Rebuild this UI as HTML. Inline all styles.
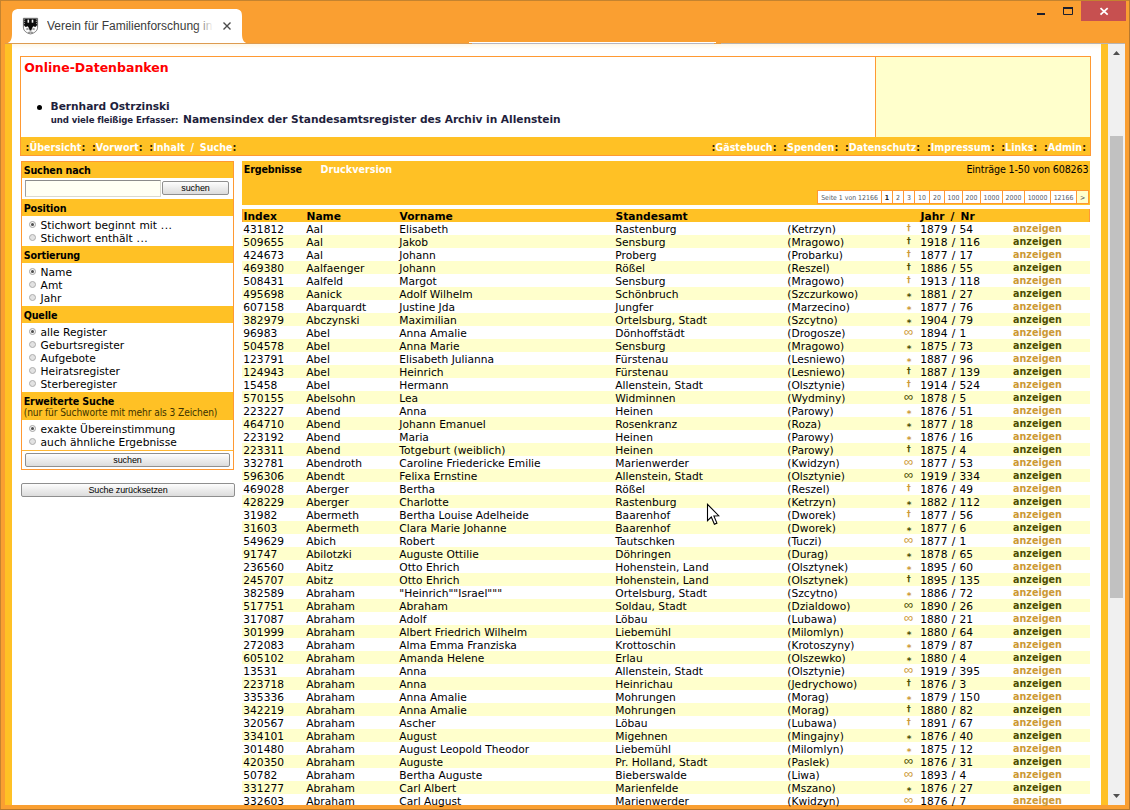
<!DOCTYPE html>
<html lang="de">
<head>
<meta charset="utf-8">
<title>Verein für Familienforschung in Ost- und Westpreußen</title>
<style>
*{box-sizing:border-box;margin:0;padding:0}
html,body{width:1130px;height:810px;overflow:hidden}
body{position:relative;background:#FA9F31;font-family:"DejaVu Sans","Liberation Sans",sans-serif;font-size:10.67px;color:#000}
.abs{position:absolute}
/* window chrome */
#edgeT{left:0;top:0;width:1130px;height:1px;background:#C4832F}
#edgeL{left:0;top:0;width:1px;height:810px;background:#C4832F}
#edgeR{left:1129px;top:0;width:1px;height:810px;background:#B9782B}
#edgeB{left:0;top:809px;width:1130px;height:1px;background:#B9782B}
#closeb{left:1081px;top:1px;width:45px;height:20px;background:#C75050}
#tabtitle{left:47px;top:18px;width:166px;height:16px;font:12px/16px "Liberation Sans",sans-serif;color:#3b3b3b;white-space:nowrap;overflow:hidden}
#tabfade{left:196px;top:18px;width:18px;height:16px;background:linear-gradient(90deg,rgba(255,255,255,0),#fff 95%)}
/* viewport */
#view{left:5px;top:44px;width:1103px;height:761px;background:#FFC125;overflow:hidden}
#page{left:7px;top:0;width:1089px;height:761px;background:#fff}
#shade{left:0;top:0;width:1089px;height:5px;background:linear-gradient(180deg,#FFF7E6,#fff)}
#sbar{left:1108px;top:44px;width:17px;height:761px;background:#F0F0F0}
#thumb{left:2px;top:92px;width:13px;height:462px;background:#C1C1C1}
/* header box (coords relative to body) */
#hbox{left:20px;top:56px;width:1071px;height:100px;border:1px solid #FF9933;background:#fff}
#hright{left:854px;top:0;width:215px;height:80px;background:#FFFFCC;border-left:1px solid #FF9933}
#nav{left:0;top:80px;width:1069px;height:18px;background:#FFC125}
.navt{top:85px;font:bold 9.6px/12px "DejaVu Sans",sans-serif;color:#fff;white-space:pre}
.navt b{color:#2e2000;font-weight:bold}
h1{left:3.2px;top:3px;font:bold 12.5px/16px "DejaVu Sans",sans-serif;color:#FF0000;white-space:nowrap}
#bullet{left:15.5px;top:48px;width:5px;height:5px;border-radius:50%;background:#000}
#l1{left:29.6px;top:43px;font:bold 10.67px/13px "DejaVu Sans",sans-serif;color:#1F1F3D;white-space:nowrap;letter-spacing:-0.04px}
#l2{left:29.8px;top:56px;font:bold 10.67px/13px "DejaVu Sans",sans-serif;color:#1F1F3D;white-space:nowrap;letter-spacing:-0.05px}
#l2 small{font:bold 9.55px/13px "DejaVu Sans Condensed","DejaVu Sans",sans-serif;letter-spacing:-0.1px;margin-right:1px}
/* left panel */
#panel{left:21px;top:161px;width:213px;height:309px;border:1px solid #FF9933;background:#fff}
.ph{left:0;width:211px;background:#FFC125;font:bold 10.67px/13px "DejaVu Sans Condensed","DejaVu Sans",sans-serif;letter-spacing:-0.15px;padding:3px 0 0 1.7px;white-space:nowrap}
.ph small{display:block;font:normal 10.15px/10px "DejaVu Sans Condensed","DejaVu Sans",sans-serif;color:#3d3300;letter-spacing:-0.1px}
.rl{left:18.6px;font:10.67px/13px "DejaVu Sans",sans-serif;white-space:nowrap}
.rd{left:7px;width:7px;height:7px;border-radius:50%;border:1px solid #adadad;background:#e2e2e2}
.rd.on{background:#f4f4f4;border-color:#a4a4a4}
.rd.on::after{content:"";position:absolute;left:1px;top:1px;width:3px;height:3px;border-radius:50%;background:#4e4e4e}
.btn{border:1px solid #8f8f8f;border-radius:2px;background:linear-gradient(180deg,#fdfdfd 0,#ececec 50%,#dcdcdc 100%);font:9px/12px "Liberation Sans",sans-serif;color:#000;text-align:center;letter-spacing:-0.1px}
#inp{left:3px;top:18px;width:136px;height:17px;background:#FFFFF4;border:1px solid #d9d9d0;border-top-color:#8b8b8b;border-left-color:#9e9e9e}
/* results */
#rhead{left:242px;top:161px;width:848px;height:44px;background:#FFC125}
#rh1{left:1.8px;top:2px;font:bold 10.67px/13px "DejaVu Sans Condensed","DejaVu Sans",sans-serif;letter-spacing:-0.15px}
#rh2{left:78.6px;top:2px;font:bold 9.6px/13px "DejaVu Sans",sans-serif;color:#fff}
#rh3{right:1.5px;top:2px;font:10.67px/13px "DejaVu Sans Condensed","DejaVu Sans",sans-serif;letter-spacing:-0.14px;white-space:nowrap}
#pag{left:575px;top:29px;height:14px;display:flex;background:#FF9933;padding:1px 0 1px 1px}
#pag span{display:block;height:12px;padding-top:1px;margin-right:1px;background:#fff;font:6.9px/12px "DejaVu Sans Condensed","DejaVu Sans",sans-serif;color:#555a66;text-align:center;white-space:nowrap;overflow:hidden}
#pag span.cur{font-weight:bold;color:#222}
#pag span.nx{background:#FFFFCC}
#thead{left:242px;top:209px;width:848px;height:13px;background:#FFC125;border-left:1px solid #FF9933;border-right:1px solid #FF9933;font:bold 10.67px/13px "DejaVu Sans",sans-serif}
#thead span{position:absolute;top:1px;white-space:nowrap}
#tbody{left:242px;top:222px;width:848px;height:585px}
.r{position:relative;height:13px;width:848px;font:10.67px/13px "DejaVu Sans",sans-serif;white-space:nowrap}
.r.e{background:#FFFFCC}
.r span{position:absolute;top:1px}
.c1{left:1.3px}.c2{left:64.3px}.c3{left:157.3px}.c4{left:373.3px}.c5{left:545.3px}.c7{left:678.3px;word-spacing:0.9px}
.c6{left:656.7px;width:20px;text-align:center;color:#CC9933}
.r .sd{font:bold 8px/9px "DejaVu Sans",sans-serif;top:1.5px}
.r .sa{font:bold 9px/10px "DejaVu Sans",sans-serif;top:4.5px;left:657.2px}
.r .si{font:13px/10px "Liberation Sans","DejaVu Sans",sans-serif;top:1px}
.c8{left:771px;top:0 !important;font:bold 9.6px/13px "DejaVu Sans",sans-serif;color:#CC9933}
.e .c6,.e .c8{color:#4D4D00}
</style>
</head>
<body>
<!-- window frame -->
<div class="abs" id="edgeT"></div><div class="abs" id="edgeL"></div><div class="abs" id="edgeR"></div><div class="abs" id="edgeB"></div>
<svg class="abs" style="left:0;top:0" width="1130" height="44" viewBox="0 0 1130 44">
  <path d="M5 44 C10 43 12 40 12 34 L12 16 C12 11 14 9 19 9 L235 9 C240 9 242 11 242 16 L242 34 C242 40 244 43 249 44 Z" fill="#fff"/>
  <rect x="5" y="43" width="467" height="1" fill="#DD9B50"/><rect x="472" y="43" width="242" height="1" fill="#B6B6C2"/><rect x="714" y="43" width="7" height="1" fill="#E39D48"/><rect x="721" y="43" width="404" height="1" fill="#B9B4B0"/><rect x="469" y="42" width="247" height="1" fill="#fff"/>
  <!-- favicon: coat of arms with eagle -->
  <g transform="translate(23,18)">
    <path d="M0.4 0.3 H14.6 V9.2 C14.6 12.8 11.5 15.2 7.5 15.9 C3.5 15.2 0.4 12.8 0.4 9.2 Z" fill="#fbfbfb" stroke="#555" stroke-width="0.8"/>
    <path d="M0.8 0.8 H14.2 V7.2 L12.3 9 L10.2 8.2 L9 10.2 L8.3 12.6 H6.7 L6 10.2 L4.8 8.2 L2.7 9 L0.8 7.2 Z" fill="#0c0c0c"/>
    <rect x="4.5" y="1.6" width="1.6" height="3.1" fill="#f4f4f4"/><rect x="8.7" y="1.6" width="1.6" height="3.1" fill="#f4f4f4"/>
    <path d="M1 1.8 H2.2 M1 3.6 H2.2 M1 5.6 H2 M12.8 1.8 H14 M12.8 3.6 H14 M13 5.6 H14 M1.2 8.3 H2 M13 8.3 H13.8" stroke="#ddd" stroke-width="0.7" fill="none"/>
    <path d="M3 10.5 L5.5 9.8 L5.8 11.5 L3.6 12.2 Z M12 10.5 L9.5 9.8 L9.2 11.5 L11.4 12.2 Z" fill="#9a9a9a"/>
    <path d="M5 14 Q7.5 13 10 14 L9.4 14.9 Q7.5 14.3 5.6 14.9 Z" fill="#777"/>
  </g>
  <!-- tab close -->
  <path d="M223.5 22.5 L230.5 29.5 M230.5 22.5 L223.5 29.5" stroke="#4a4a4a" stroke-width="1.4" fill="none"/>
  <!-- window buttons -->
  <rect x="1037" y="13" width="8" height="2" fill="#1b1f2e"/>
  <path d="M1063.5 8 H1072.5 V14.5 H1063.5 Z" fill="none" stroke="#1b1f2e" stroke-width="1"/>
  <rect x="1063" y="7" width="10" height="2" fill="#1b1f2e"/>
</svg>
<div class="abs" id="closeb"><svg width="45" height="20" viewBox="0 0 45 20"><path d="M19.5 7.1 L26.7 13.7 M26.7 7.1 L19.5 13.7" stroke="#fff" stroke-width="1.8" fill="none"/></svg></div>
<div class="abs" id="tabtitle">Verein für Familienforschung in</div>
<div class="abs" id="tabfade"></div>

<!-- page viewport -->
<div class="abs" id="view"><div class="abs" id="page"><div class="abs" id="shade"></div></div></div>
<div class="abs" id="sbar">
  <div class="abs" id="thumb"></div>
  <svg class="abs" style="left:0;top:0" width="17" height="761" viewBox="0 0 17 761"><path d="M5 11 L8.5 7 L12 11 Z" fill="#505050"/><path d="M5 750 L12 750 L8.5 754 Z" fill="#505050"/></svg>
</div>

<!-- header -->
<div class="abs" id="hbox">
  <h1 class="abs">Online-Datenbanken</h1>
  <div class="abs" id="bullet"></div>
  <div class="abs" id="l1">Bernhard Ostrzinski</div>
  <div class="abs" id="l2"><small>und viele fleißige Erfasser:</small> Namensindex der Standesamtsregister des Archiv in Allenstein</div>
  <div class="abs" id="hright"></div>
  <div class="abs" id="nav"></div>
  <div class="abs navt" style="left:4.6px"><b>:</b>Übersicht<b>:</b>  <b>:</b>Vorwort<b>:</b>  <b>:</b><span style="word-spacing:2.4px">Inhalt / Suche</span><b>:</b></div>
  <div class="abs navt" style="right:4px"><b>:</b>Gästebuch<b>:</b>  <b>:</b>Spenden<b>:</b>  <b>:</b>Datenschutz<b>:</b>  <b>:</b>Impressum<b>:</b>  <b>:</b>Links<b>:</b>  <b>:</b>Admin<b>:</b></div>
</div>

<!-- left search panel -->
<div class="abs" id="panel">
  <div class="abs ph" style="top:0;height:16px;padding-top:2px">Suchen nach</div>
  <div class="abs" id="inp"></div>
  <div class="abs btn" style="left:140px;top:19px;width:67px;height:14px">suchen</div>
  <div class="abs ph" style="top:37px;height:17px">Position</div>
  <div class="abs rd on" style="top:59px"></div><div class="abs rl" style="top:57px;word-spacing:0.5px">Stichwort beginnt mit <span style="letter-spacing:0.5px">...</span></div>
  <div class="abs rd" style="top:72px"></div><div class="abs rl" style="top:70px;word-spacing:0.5px">Stichwort enthält <span style="letter-spacing:0.5px">...</span></div>
  <div class="abs ph" style="top:84px;height:17px">Sortierung</div>
  <div class="abs rd on" style="top:106px"></div><div class="abs rl" style="top:104px">Name</div>
  <div class="abs rd" style="top:119px"></div><div class="abs rl" style="top:117px">Amt</div>
  <div class="abs rd" style="top:132px"></div><div class="abs rl" style="top:130px">Jahr</div>
  <div class="abs ph" style="top:144px;height:17px">Quelle</div>
  <div class="abs rd on" style="top:166px"></div><div class="abs rl" style="top:164px">alle Register</div>
  <div class="abs rd" style="top:179px"></div><div class="abs rl" style="top:177px">Geburtsregister</div>
  <div class="abs rd" style="top:192px"></div><div class="abs rl" style="top:190px">Aufgebote</div>
  <div class="abs rd" style="top:205px"></div><div class="abs rl" style="top:203px">Heiratsregister</div>
  <div class="abs rd" style="top:218px"></div><div class="abs rl" style="top:216px">Sterberegister</div>
  <div class="abs ph" style="top:230px;height:28px">Erweiterte Suche<small>(nur für Suchworte mit mehr als 3 Zeichen)</small></div>
  <div class="abs rd on" style="top:263px"></div><div class="abs rl" style="top:261px">exakte Übereinstimmung</div>
  <div class="abs rd" style="top:276px"></div><div class="abs rl" style="top:274px">auch ähnliche Ergebnisse</div>
  <div class="abs" style="left:0;top:288px;width:211px;height:1px;background:#FFB733"></div>
  <div class="abs btn" style="left:3px;top:291px;width:205px;height:14px">suchen</div>
</div>
<div class="abs btn" style="left:21px;top:483px;width:214px;height:14px">Suche zurücksetzen</div>

<!-- results header -->
<div class="abs" id="rhead">
  <div class="abs" id="rh1">Ergebnisse</div>
  <div class="abs" id="rh2">Druckversion</div>
  <div class="abs" id="rh3">Einträge 1-50 von 608263</div>
  <div class="abs" id="pag"><span style="width:63px">Seite 1 von 12166</span><span class="cur" style="width:10px">1</span><span style="width:10px">2</span><span style="width:10px">3</span><span style="width:14px">10</span><span style="width:14px">20</span><span style="width:17px">100</span><span style="width:17px">200</span><span style="width:21px">1000</span><span style="width:21px">2000</span><span style="width:25px">10000</span><span style="width:25px">12166</span><span class="nx" style="width:11px">&gt;</span></div>
</div>
<div class="abs" id="thead"><span style="left:0.5px">Index</span><span style="left:63.5px">Name</span><span style="left:156.5px">Vorname</span><span style="left:372.5px">Standesamt</span><span style="left:677.5px;word-spacing:2.4px">Jahr / Nr</span></div>
<div class="abs" id="tbody">
<div class="r"><span class="c1">431812</span><span class="c2">Aal</span><span class="c3">Elisabeth</span><span class="c4">Rastenburg</span><span class="c5">(Ketrzyn)</span><span class="c6 sd">†</span><span class="c7">1879 / 54</span><span class="c8">anzeigen</span></div>
<div class="r e"><span class="c1">509655</span><span class="c2">Aal</span><span class="c3">Jakob</span><span class="c4">Sensburg</span><span class="c5">(Mragowo)</span><span class="c6 sd">†</span><span class="c7">1918 / 116</span><span class="c8">anzeigen</span></div>
<div class="r"><span class="c1">424673</span><span class="c2">Aal</span><span class="c3">Johann</span><span class="c4">Proberg</span><span class="c5">(Probarku)</span><span class="c6 sd">†</span><span class="c7">1877 / 17</span><span class="c8">anzeigen</span></div>
<div class="r e"><span class="c1">469380</span><span class="c2">Aalfaenger</span><span class="c3">Johann</span><span class="c4">Rößel</span><span class="c5">(Reszel)</span><span class="c6 sd">†</span><span class="c7">1886 / 55</span><span class="c8">anzeigen</span></div>
<div class="r"><span class="c1">508431</span><span class="c2">Aalfeld</span><span class="c3">Margot</span><span class="c4">Sensburg</span><span class="c5">(Mragowo)</span><span class="c6 sd">†</span><span class="c7">1913 / 118</span><span class="c8">anzeigen</span></div>
<div class="r e"><span class="c1">495698</span><span class="c2">Aanick</span><span class="c3">Adolf Wilhelm</span><span class="c4">Schönbruch</span><span class="c5">(Szczurkowo)</span><span class="c6 sa">*</span><span class="c7">1881 / 27</span><span class="c8">anzeigen</span></div>
<div class="r"><span class="c1">607158</span><span class="c2">Abarquardt</span><span class="c3">Justine Jda</span><span class="c4">Jungfer</span><span class="c5">(Marzecino)</span><span class="c6 sa">*</span><span class="c7">1877 / 76</span><span class="c8">anzeigen</span></div>
<div class="r e"><span class="c1">382979</span><span class="c2">Abczynski</span><span class="c3">Maximilian</span><span class="c4">Ortelsburg, Stadt</span><span class="c5">(Szcytno)</span><span class="c6 sa">*</span><span class="c7">1904 / 79</span><span class="c8">anzeigen</span></div>
<div class="r"><span class="c1">96983</span><span class="c2">Abel</span><span class="c3">Anna Amalie</span><span class="c4">Dönhoffstädt</span><span class="c5">(Drogosze)</span><span class="c6 si">∞</span><span class="c7">1894 / 1</span><span class="c8">anzeigen</span></div>
<div class="r e"><span class="c1">504578</span><span class="c2">Abel</span><span class="c3">Anna Marie</span><span class="c4">Sensburg</span><span class="c5">(Mragowo)</span><span class="c6 sa">*</span><span class="c7">1875 / 73</span><span class="c8">anzeigen</span></div>
<div class="r"><span class="c1">123791</span><span class="c2">Abel</span><span class="c3">Elisabeth Julianna</span><span class="c4">Fürstenau</span><span class="c5">(Lesniewo)</span><span class="c6 sa">*</span><span class="c7">1887 / 96</span><span class="c8">anzeigen</span></div>
<div class="r e"><span class="c1">124943</span><span class="c2">Abel</span><span class="c3">Heinrich</span><span class="c4">Fürstenau</span><span class="c5">(Lesniewo)</span><span class="c6 sd">†</span><span class="c7">1887 / 139</span><span class="c8">anzeigen</span></div>
<div class="r"><span class="c1">15458</span><span class="c2">Abel</span><span class="c3">Hermann</span><span class="c4">Allenstein, Stadt</span><span class="c5">(Olsztynie)</span><span class="c6 sd">†</span><span class="c7">1914 / 524</span><span class="c8">anzeigen</span></div>
<div class="r e"><span class="c1">570155</span><span class="c2">Abelsohn</span><span class="c3">Lea</span><span class="c4">Widminnen</span><span class="c5">(Wydminy)</span><span class="c6 si">∞</span><span class="c7">1878 / 5</span><span class="c8">anzeigen</span></div>
<div class="r"><span class="c1">223227</span><span class="c2">Abend</span><span class="c3">Anna</span><span class="c4">Heinen</span><span class="c5">(Parowy)</span><span class="c6 sa">*</span><span class="c7">1876 / 51</span><span class="c8">anzeigen</span></div>
<div class="r e"><span class="c1">464710</span><span class="c2">Abend</span><span class="c3">Johann Emanuel</span><span class="c4">Rosenkranz</span><span class="c5">(Roza)</span><span class="c6 sa">*</span><span class="c7">1877 / 18</span><span class="c8">anzeigen</span></div>
<div class="r"><span class="c1">223192</span><span class="c2">Abend</span><span class="c3">Maria</span><span class="c4">Heinen</span><span class="c5">(Parowy)</span><span class="c6 sa">*</span><span class="c7">1876 / 16</span><span class="c8">anzeigen</span></div>
<div class="r e"><span class="c1">223311</span><span class="c2">Abend</span><span class="c3">Totgeburt (weiblich)</span><span class="c4">Heinen</span><span class="c5">(Parowy)</span><span class="c6 sd">†</span><span class="c7">1875 / 4</span><span class="c8">anzeigen</span></div>
<div class="r"><span class="c1">332781</span><span class="c2">Abendroth</span><span class="c3">Caroline Friedericke Emilie</span><span class="c4">Marienwerder</span><span class="c5">(Kwidzyn)</span><span class="c6 si">∞</span><span class="c7">1877 / 53</span><span class="c8">anzeigen</span></div>
<div class="r e"><span class="c1">596306</span><span class="c2">Abendt</span><span class="c3">Felixa Ernstine</span><span class="c4">Allenstein, Stadt</span><span class="c5">(Olsztynie)</span><span class="c6 si">∞</span><span class="c7">1919 / 334</span><span class="c8">anzeigen</span></div>
<div class="r"><span class="c1">469028</span><span class="c2">Aberger</span><span class="c3">Bertha</span><span class="c4">Rößel</span><span class="c5">(Reszel)</span><span class="c6 sd">†</span><span class="c7">1876 / 49</span><span class="c8">anzeigen</span></div>
<div class="r e"><span class="c1">428229</span><span class="c2">Aberger</span><span class="c3">Charlotte</span><span class="c4">Rastenburg</span><span class="c5">(Ketrzyn)</span><span class="c6 sa">*</span><span class="c7">1882 / 112</span><span class="c8">anzeigen</span></div>
<div class="r"><span class="c1">31982</span><span class="c2">Abermeth</span><span class="c3">Bertha Louise Adelheide</span><span class="c4">Baarenhof</span><span class="c5">(Dworek)</span><span class="c6 sd">†</span><span class="c7">1877 / 56</span><span class="c8">anzeigen</span></div>
<div class="r e"><span class="c1">31603</span><span class="c2">Abermeth</span><span class="c3">Clara Marie Johanne</span><span class="c4">Baarenhof</span><span class="c5">(Dworek)</span><span class="c6 sa">*</span><span class="c7">1877 / 6</span><span class="c8">anzeigen</span></div>
<div class="r"><span class="c1">549629</span><span class="c2">Abich</span><span class="c3">Robert</span><span class="c4">Tautschken</span><span class="c5">(Tuczi)</span><span class="c6 si">∞</span><span class="c7">1877 / 1</span><span class="c8">anzeigen</span></div>
<div class="r e"><span class="c1">91747</span><span class="c2">Abilotzki</span><span class="c3">Auguste Ottilie</span><span class="c4">Döhringen</span><span class="c5">(Durag)</span><span class="c6 sa">*</span><span class="c7">1878 / 65</span><span class="c8">anzeigen</span></div>
<div class="r"><span class="c1">236560</span><span class="c2">Abitz</span><span class="c3">Otto Ehrich</span><span class="c4">Hohenstein, Land</span><span class="c5">(Olsztynek)</span><span class="c6 sa">*</span><span class="c7">1895 / 60</span><span class="c8">anzeigen</span></div>
<div class="r e"><span class="c1">245707</span><span class="c2">Abitz</span><span class="c3">Otto Ehrich</span><span class="c4">Hohenstein, Land</span><span class="c5">(Olsztynek)</span><span class="c6 sd">†</span><span class="c7">1895 / 135</span><span class="c8">anzeigen</span></div>
<div class="r"><span class="c1">382589</span><span class="c2">Abraham</span><span class="c3">&quot;Heinrich&quot;&quot;Israel&quot;&quot;&quot;</span><span class="c4">Ortelsburg, Stadt</span><span class="c5">(Szcytno)</span><span class="c6 sa">*</span><span class="c7">1886 / 72</span><span class="c8">anzeigen</span></div>
<div class="r e"><span class="c1">517751</span><span class="c2">Abraham</span><span class="c3">Abraham</span><span class="c4">Soldau, Stadt</span><span class="c5">(Dzialdowo)</span><span class="c6 si">∞</span><span class="c7">1890 / 26</span><span class="c8">anzeigen</span></div>
<div class="r"><span class="c1">317087</span><span class="c2">Abraham</span><span class="c3">Adolf</span><span class="c4">Löbau</span><span class="c5">(Lubawa)</span><span class="c6 si">∞</span><span class="c7">1880 / 21</span><span class="c8">anzeigen</span></div>
<div class="r e"><span class="c1">301999</span><span class="c2">Abraham</span><span class="c3">Albert Friedrich Wilhelm</span><span class="c4">Liebemühl</span><span class="c5">(Milomlyn)</span><span class="c6 sa">*</span><span class="c7">1880 / 64</span><span class="c8">anzeigen</span></div>
<div class="r"><span class="c1">272083</span><span class="c2">Abraham</span><span class="c3">Alma Emma Franziska</span><span class="c4">Krottoschin</span><span class="c5">(Krotoszyny)</span><span class="c6 sa">*</span><span class="c7">1879 / 87</span><span class="c8">anzeigen</span></div>
<div class="r e"><span class="c1">605102</span><span class="c2">Abraham</span><span class="c3">Amanda Helene</span><span class="c4">Erlau</span><span class="c5">(Olszewko)</span><span class="c6 sa">*</span><span class="c7">1880 / 4</span><span class="c8">anzeigen</span></div>
<div class="r"><span class="c1">13531</span><span class="c2">Abraham</span><span class="c3">Anna</span><span class="c4">Allenstein, Stadt</span><span class="c5">(Olsztynie)</span><span class="c6 si">∞</span><span class="c7">1919 / 395</span><span class="c8">anzeigen</span></div>
<div class="r e"><span class="c1">223718</span><span class="c2">Abraham</span><span class="c3">Anna</span><span class="c4">Heinrichau</span><span class="c5">(Jedrychowo)</span><span class="c6 sd">†</span><span class="c7">1876 / 3</span><span class="c8">anzeigen</span></div>
<div class="r"><span class="c1">335336</span><span class="c2">Abraham</span><span class="c3">Anna Amalie</span><span class="c4">Mohrungen</span><span class="c5">(Morag)</span><span class="c6 sa">*</span><span class="c7">1879 / 150</span><span class="c8">anzeigen</span></div>
<div class="r e"><span class="c1">342219</span><span class="c2">Abraham</span><span class="c3">Anna Amalie</span><span class="c4">Mohrungen</span><span class="c5">(Morag)</span><span class="c6 sd">†</span><span class="c7">1880 / 82</span><span class="c8">anzeigen</span></div>
<div class="r"><span class="c1">320567</span><span class="c2">Abraham</span><span class="c3">Ascher</span><span class="c4">Löbau</span><span class="c5">(Lubawa)</span><span class="c6 sd">†</span><span class="c7">1891 / 67</span><span class="c8">anzeigen</span></div>
<div class="r e"><span class="c1">334101</span><span class="c2">Abraham</span><span class="c3">August</span><span class="c4">Migehnen</span><span class="c5">(Mingajny)</span><span class="c6 sa">*</span><span class="c7">1876 / 40</span><span class="c8">anzeigen</span></div>
<div class="r"><span class="c1">301480</span><span class="c2">Abraham</span><span class="c3">August Leopold Theodor</span><span class="c4">Liebemühl</span><span class="c5">(Milomlyn)</span><span class="c6 sa">*</span><span class="c7">1875 / 12</span><span class="c8">anzeigen</span></div>
<div class="r e"><span class="c1">420350</span><span class="c2">Abraham</span><span class="c3">Auguste</span><span class="c4">Pr. Holland, Stadt</span><span class="c5">(Paslek)</span><span class="c6 si">∞</span><span class="c7">1876 / 31</span><span class="c8">anzeigen</span></div>
<div class="r"><span class="c1">50782</span><span class="c2">Abraham</span><span class="c3">Bertha Auguste</span><span class="c4">Bieberswalde</span><span class="c5">(Liwa)</span><span class="c6 si">∞</span><span class="c7">1893 / 4</span><span class="c8">anzeigen</span></div>
<div class="r e"><span class="c1">331277</span><span class="c2">Abraham</span><span class="c3">Carl Albert</span><span class="c4">Marienfelde</span><span class="c5">(Mszano)</span><span class="c6 sa">*</span><span class="c7">1876 / 27</span><span class="c8">anzeigen</span></div>
<div class="r"><span class="c1">332603</span><span class="c2">Abraham</span><span class="c3">Carl August</span><span class="c4">Marienwerder</span><span class="c5">(Kwidzyn)</span><span class="c6 si">∞</span><span class="c7">1876 / 7</span><span class="c8">anzeigen</span></div>
</div>
<!-- mouse cursor -->
<svg class="abs" style="left:706px;top:503px" width="15" height="24" viewBox="0 0 15 24"><path d="M1.5 1.3 V17.6 L5.3 14 L8.4 21.2 L10.9 20.1 L7.9 13 L12.7 12.7 Z" fill="#fff" stroke="#000" stroke-width="1.1" stroke-linejoin="miter"/></svg>
</body>
</html>
